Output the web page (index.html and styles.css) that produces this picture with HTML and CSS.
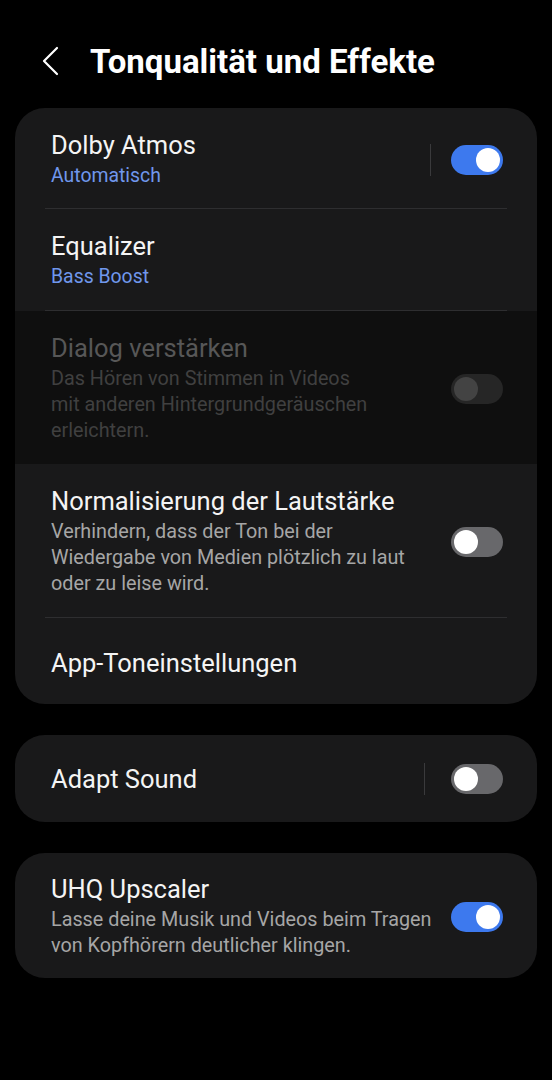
FILE: index.html
```html
<!DOCTYPE html>
<html>
<head>
    <meta charset="UTF-8">
    <title>Tonqualität und Effekte</title>
    <link rel="stylesheet" href="styles.css">
</head>
<body>
    <!-- Header -->
    <div class="header">
        <svg class="back" width="24" height="32" viewBox="0 0 24 32">
            <path d="M16 3 L3 16 L16 29" fill="none" stroke="#fff" stroke-width="2.2" stroke-linecap="round" stroke-linejoin="round"/>
        </svg>
        <h1>Tonqualität und Effekte</h1>
    </div>

    <!-- Main settings -->
    <div class="card">
        <div class="row first">
            <div class="text">
                <div class="title">Dolby Atmos</div>
                <div class="sub">Automatisch</div>
            </div>
            <div class="sep"></div>
            <div class="switch on"><span class="knob"></span></div>
        </div>
        <div class="divider"></div>
        <div class="row">
            <div class="text">
                <div class="title">Equalizer</div>
                <div class="sub">Bass Boost</div>
            </div>
        </div>
        <div class="divider"></div>
        <div class="row disabled">
            <div class="text">
                <div class="title">Dialog verstärken</div>
                <div class="desc">Das Hören von Stimmen in Videos<br>mit anderen Hintergrundgeräuschen<br>erleichtern.</div>
            </div>
            <div class="switch off"><span class="knob"></span></div>
        </div>
        <div class="row">
            <div class="text">
                <div class="title">Normalisierung der Lautstärke</div>
                <div class="desc">Verhindern, dass der Ton bei der<br>Wiedergabe von Medien plötzlich zu laut<br>oder zu leise wird.</div>
            </div>
            <div class="switch off"><span class="knob"></span></div>
        </div>
        <div class="divider"></div>
        <div class="row single link">
            <div class="text">
                <div class="title">App-Toneinstellungen</div>
            </div>
        </div>
    </div>

    <div class="card">
        <div class="row single">
            <div class="text">
                <div class="title">Adapt Sound</div>
            </div>
            <div class="sep wide"></div>
            <div class="switch off"><span class="knob"></span></div>
        </div>
    </div>

    <div class="card">
        <div class="row last">
            <div class="text">
                <div class="title">UHQ Upscaler</div>
                <div class="desc">Lasse deine Musik und Videos beim Tragen<br>von Kopfhörern deutlicher klingen.</div>
            </div>
            <div class="switch on"><span class="knob"></span></div>
        </div>
    </div>
</body>
</html>
```

FILE: styles.css
```css
body {
    margin: 0;
    background-color: #000;
    font-family: Roboto, "Noto Sans", sans-serif;
    color: #f4f4f4;
    width: 552px;
}
.header {
    display: flex;
    align-items: center;
    height: 108px;
    padding-left: 41px;
    padding-top: 14px;
    box-sizing: border-box;
}
.back {
    margin-right: 25px;
}
h1 {
    margin: 0;
    font-size: 33px;
    font-weight: 700;
    color: #fff;
}
.card {
    margin: 0 15px 31px;
    background-color: #19191a;
    border-radius: 30px;
    overflow: hidden;
}
.row {
    display: flex;
    align-items: center;
    padding: 22px 34px 20px 36px;
}
.row.first {
    padding-bottom: 19px;
}
.row.single {
    padding-top: 28px;
    padding-bottom: 27px;
}
.row.link {
    padding-top: 30px;
    padding-bottom: 25px;
}
.row.last {
    padding-top: 21px;
    padding-bottom: 19px;
}
.text {
    flex: 1;
}
.title {
    font-size: 25.5px;
    line-height: 31px;
}
.sub {
    margin-top: 2px;
    font-size: 19.4px;
    line-height: 26px;
    color: #7097ec;
}
.desc {
    margin-top: 2px;
    font-size: 19.8px;
    line-height: 26px;
    color: #a6a6a6;
}
.divider {
    height: 1px;
    margin: 0 30px;
    background-color: #2e2e30;
}
.disabled {
    background-color: #0f0f0f;
}
.disabled .title {
    color: #575757;
}
.disabled .desc {
    color: #404040;
}
.sep {
    width: 1px;
    height: 32px;
    background-color: #3a3a3c;
    margin-right: 20px;
}
.sep.wide {
    margin-right: 26px;
}
.switch {
    position: relative;
    width: 52px;
    height: 30px;
    border-radius: 15px;
    flex-shrink: 0;
}
.switch .knob {
    position: absolute;
    top: 3px;
    width: 24px;
    height: 24px;
    border-radius: 50%;
    background-color: #fff;
}
.switch.on {
    background-color: #3d79ee;
}
.switch.on .knob {
    right: 3px;
}
.switch.off {
    background-color: #68686b;
}
.switch.off .knob {
    left: 3px;
}
.disabled .switch.off {
    background-color: #262626;
}
.disabled .switch.off .knob {
    background-color: #434343;
}
```
